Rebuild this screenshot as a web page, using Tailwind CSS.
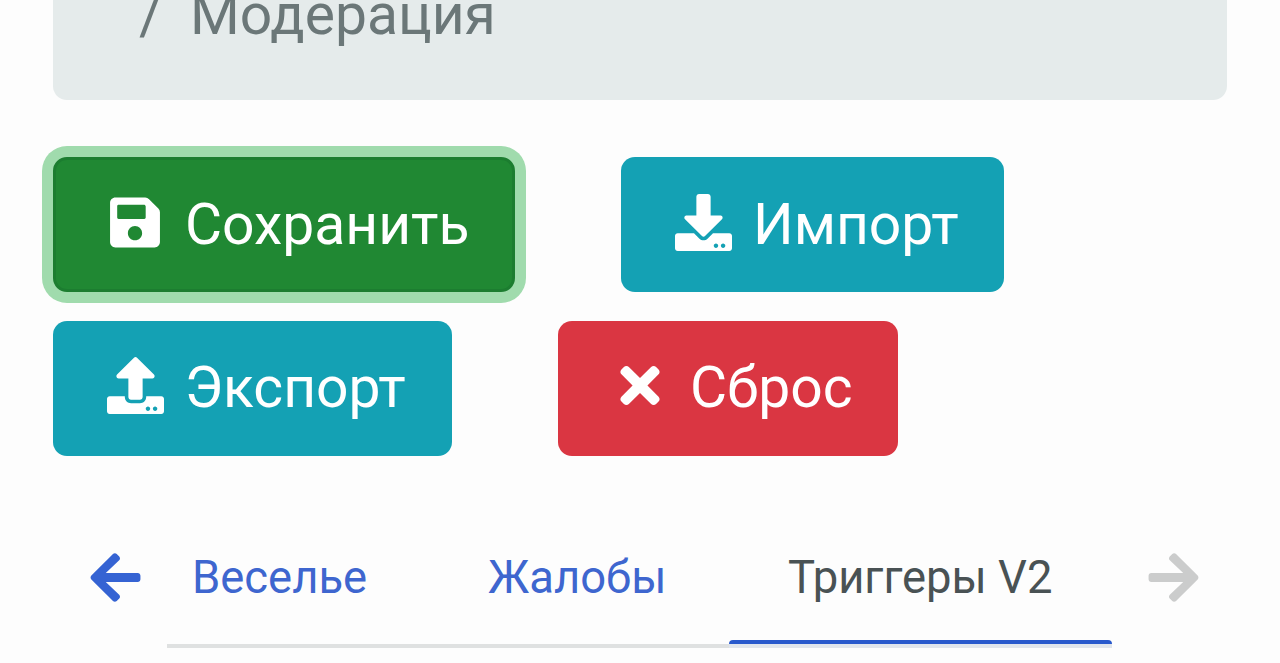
<!DOCTYPE html>
<html lang="ru">
<head>
    <meta charset="UTF-8">
    <meta name="viewport" content="width=device-width, initial-scale=1.0">
    <title>Модерация</title>
    <script src="https://cdn.jsdelivr.net/npm/@tailwindcss/browser@4"></script>
</head>
<body class="h-[663px] overflow-hidden bg-[#fdfdfd] font-[Roboto,sans-serif]">
    <nav class="ml-[53px] flex h-[100px] w-[1174px] items-start rounded-b-[14px] bg-[#e5ebeb] pl-[85px] text-[57px] leading-[67px] text-[#6b7778]">
        <span class="-mt-[19px] w-[53px] pl-[1px]">/</span>
        <span class="-mt-[19px] -ml-px">Модерация</span>
    </nav>

    <main>
        <div class="mt-[57px] ml-[53px] flex gap-[106px] text-[57px] text-white">
            <button class="flex h-[135px] w-[462px] items-center rounded-[14px] border-[3.5px] border-[#1c7d30] bg-[#208833] pl-[43px] ring-[11px] ring-[#a0dbad]">
                <span class="flex w-[71px] justify-center">
                    <svg class="-mt-[4px] h-[57px] w-[50px]" viewBox="0 0 448 512" fill="currentColor"><path d="M433.941 129.941l-83.882-83.882A48 48 0 0 0 316.118 32H48C21.49 32 0 53.49 0 80v352c0 26.510 21.490 48 48 48h352c26.510 0 48-21.490 48-48V163.882a48 48 0 0 0-14.059-33.941zM224 416c-35.346 0-64-28.654-64-64 0-35.346 28.654-64 64-64s64 28.654 64 64c0 35.346-28.654 64-64 64zm96-304.520V212c0 6.627-5.373 12-12 12H76c-6.627 0-12-5.373-12-12V108c0-6.627 5.373-12 12-12h228.520c3.183 0 6.235 1.264 8.485 3.515l3.480 3.480A11.996 11.996 0 0 1 320 111.480z"/></svg>
                </span>
                <span class="ml-[15px]">Сохранить</span>
            </button>
            <button class="flex h-[135px] w-[383px] items-center rounded-[14px] bg-[#14a1b4] pl-[47px]">
                <span class="flex w-[71px] justify-center">
                    <svg class="-mt-[4px] size-[57px]" viewBox="0 0 512 512" fill="currentColor"><path d="M216 0h80c13.3 0 24 10.7 24 24v168h87.7c17.8 0 26.7 21.5 14.1 34.1L269.7 378.3c-7.5 7.5-19.8 7.5-27.3 0L90.1 226.1c-12.6-12.6-3.7-34.1 14.1-34.1H192V24c0-13.3 10.7-24 24-24zm296 376v112c0 13.3-10.7 24-24 24H24c-13.3 0-24-10.7-24-24V376c0-13.3 10.7-24 24-24h146.7l49 49c20.1 20.1 52.5 20.1 72.6 0l49-49H488c13.3 0 24 10.7 24 24zm-124 88c0-11-9-20-20-20s-20 9-20 20 9 20 20 20 20-9 20-20zm64 0c0-11-9-20-20-20s-20 9-20 20 9 20 20 20 20-9 20-20z"/></svg>
                </span>
                <span class="ml-[14px]">Импорт</span>
            </button>
        </div>

        <div class="mt-[28.5px] ml-[53px] flex gap-[106.5px] text-[57px] text-white">
            <button class="flex h-[135px] w-[398.5px] items-center rounded-[14px] bg-[#14a1b4] pl-[46.5px]">
                <span class="flex w-[71px] justify-center">
                    <svg class="-mt-[5px] size-[57px]" viewBox="0 0 512 512" fill="currentColor"><path d="M296 384h-80c-13.3 0-24-10.7-24-24V192h-87.7c-17.8 0-26.7-21.5-14.1-34.1L242.3 5.7c7.5-7.5 19.8-7.5 27.3 0l152.2 152.2c12.6 12.6 3.7 34.1-14.1 34.1H320v168c0 13.3-10.7 24-24 24zm216-8v112c0 13.3-10.7 24-24 24H24c-13.3 0-24-10.7-24-24V376c0-13.3 10.7-24 24-24h136v8c0 30.9 25.1 56 56 56h80c30.9 0 56-25.1 56-56v-8h136c13.3 0 24 10.7 24 24zm-124 88c0-11-9-20-20-20s-20 9-20 20 9 20 20 20 20-9 20-20zm64 0c0-11-9-20-20-20s-20 9-20 20 9 20 20 20 20-9 20-20z"/></svg>
                </span>
                <span class="ml-[14px]">Экспорт</span>
            </button>
            <button class="flex h-[135px] w-[340px] items-center rounded-[14px] bg-[#da3642] pl-[46px]">
                <span class="flex w-[71px] justify-center">
                    <svg class="-mt-[5px] h-[57px] w-[40px]" viewBox="0 0 352 512" fill="currentColor"><path d="M242.72 256l100.07-100.07c12.28-12.28 12.28-32.19 0-44.48l-22.24-22.24c-12.28-12.28-32.19-12.28-44.48 0L176 189.28 75.93 89.21c-12.28-12.28-32.19-12.28-44.48 0L9.21 111.45c-12.28 12.28-12.28 32.19 0 44.48L109.28 256 9.21 356.07c-12.28 12.28-12.28 32.19 0 44.48l22.24 22.24c12.28 12.28 32.2 12.28 44.48 0L176 322.72l100.07 100.07c12.28 12.28 32.2 12.28 44.48 0l22.24-22.24c12.28-12.28 12.28-32.19 0-44.48L242.72 256z"/></svg>
                </span>
                <span class="ml-[15px]">Сброс</span>
            </button>
        </div>

        <!-- Вкладки -->
        <div class="mt-[56.5px] flex h-[136px] text-[45.4px]">
            <button class="flex w-[167px] items-center pb-[5px] pl-[90px] text-[#3563d3]">
                <svg class="h-[57px] w-[51px]" viewBox="0 0 448 512" fill="currentColor"><path d="M257.5 445.1l-22.2 22.2c-9.4 9.4-24.6 9.4-33.9 0L7 273c-9.4-9.4-9.4-24.6 0-33.9L201.4 44.7c9.4-9.4 24.6-9.4 33.9 0l22.2 22.2c9.5 9.5 9.3 25-.4 34.3L136.6 216H424c13.3 0 24 10.7 24 24v32c0 13.3-10.7 24-24 24H136.6l120.5 114.8c9.8 9.3 10 24.8.4 34.3z"/></svg>
            </button>
            <div class="flex w-[945px]">
                <a href="#" class="flex w-[257px] items-center border-b-4 border-[#dfe1e1] pl-[25px] text-[#3e66cf]">Веселье</a>
                <a href="#" class="flex w-[305px] items-center border-b-4 border-[#dfe1e1] pl-[64px] text-[#3e66cf]">Жалобы</a>
                <a href="#" class="flex w-[383px] flex-col border-b-4 border-[#e0e5ec] text-[#495254]">
                    <span class="flex h-[128px] items-center pt-[4px] pl-[59px]">Триггеры V2</span>
                    <span class="h-[4px] rounded-t-[4px] bg-[#2859cc]"></span>
                </a>
            </div>
            <button class="flex items-center pb-[5px] pl-[36px] text-[#cbcccc]">
                <svg class="h-[57px] w-[51px]" viewBox="0 0 448 512" fill="currentColor"><path d="M190.5 66.9l22.2-22.2c9.4-9.4 24.6-9.4 33.9 0L441 239c9.4 9.4 9.4 24.6 0 33.9L246.6 467.3c-9.4 9.4-24.6 9.4-33.9 0l-22.2-22.2c-9.5-9.5-9.3-25 .4-34.3L311.4 296H24c-13.3 0-24-10.7-24-24v-32c0-13.3 10.7-24 24-24h287.4L190.900 101.200c-9.800-9.300-10-24.800-.4-34.300z"/></svg>
            </button>
        </div>
    </main>
</body>
</html>
